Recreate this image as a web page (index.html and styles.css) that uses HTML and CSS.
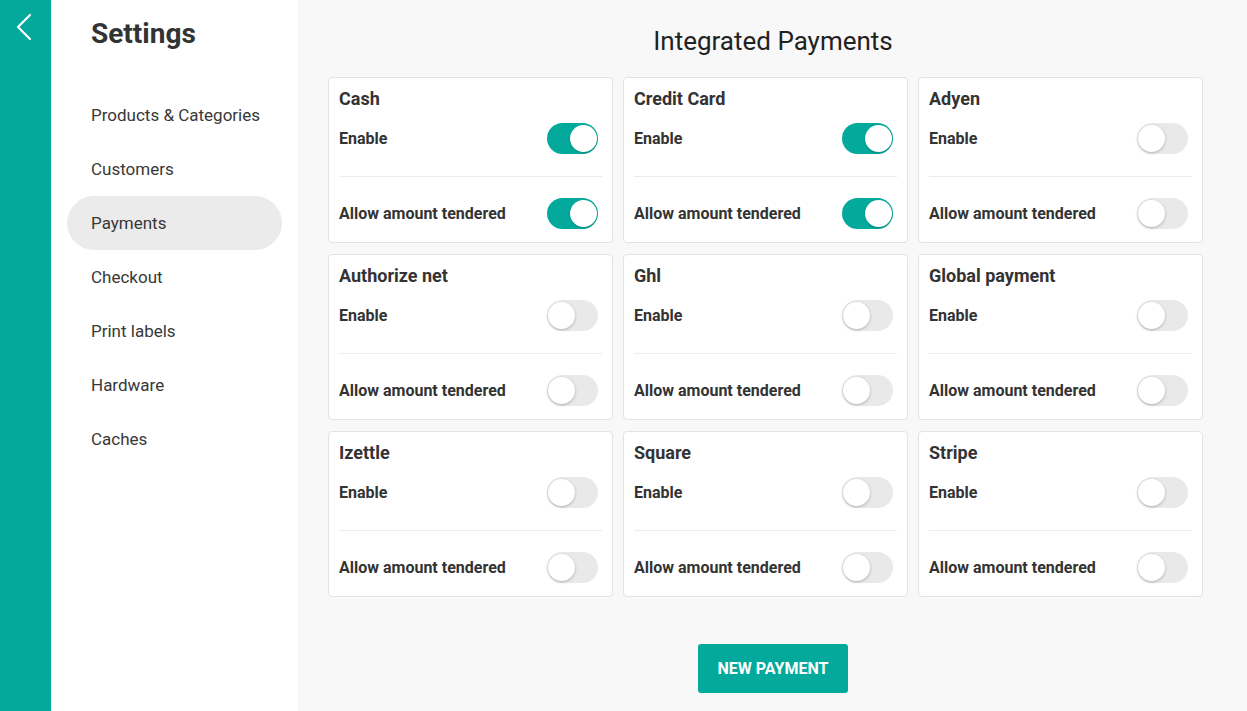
FILE: index.html
```html
<!DOCTYPE html>
<html>
<head>
<meta charset="utf-8">
<link rel="stylesheet" href="styles.css">
</head>
<body>
<div class="app">
  <aside class="rail">
    <svg class="back" width="18" height="28" viewBox="0 0 18 28"><path d="M15 2 L3 14 L15 26" fill="none" stroke="#fff" stroke-width="2.2" stroke-linecap="round" stroke-linejoin="round"/></svg>
  </aside>
  <nav class="settings">
    <h1 class="settings-title">Settings</h1>
    <ul class="nav">
      <li class="nav-item">Products &amp; Categories</li>
      <li class="nav-item">Customers</li>
      <li class="nav-item active">Payments</li>
      <li class="nav-item">Checkout</li>
      <li class="nav-item">Print labels</li>
      <li class="nav-item">Hardware</li>
      <li class="nav-item">Caches</li>
    </ul>
  </nav>
  <main class="main">
    <h2 class="main-title">Integrated Payments</h2>
    <div class="grid">
      <div class="card">
        <div class="card-title">Cash</div>
        <div class="row first"><span>Enable</span><span class="switch on"></span></div>
        <div class="row"><span>Allow amount tendered</span><span class="switch on"></span></div>
      </div>
      <div class="card">
        <div class="card-title">Credit Card</div>
        <div class="row first"><span>Enable</span><span class="switch on"></span></div>
        <div class="row"><span>Allow amount tendered</span><span class="switch on"></span></div>
      </div>
      <div class="card">
        <div class="card-title">Adyen</div>
        <div class="row first"><span>Enable</span><span class="switch"></span></div>
        <div class="row"><span>Allow amount tendered</span><span class="switch"></span></div>
      </div>
      <div class="card">
        <div class="card-title">Authorize net</div>
        <div class="row first"><span>Enable</span><span class="switch"></span></div>
        <div class="row"><span>Allow amount tendered</span><span class="switch"></span></div>
      </div>
      <div class="card">
        <div class="card-title">Ghl</div>
        <div class="row first"><span>Enable</span><span class="switch"></span></div>
        <div class="row"><span>Allow amount tendered</span><span class="switch"></span></div>
      </div>
      <div class="card">
        <div class="card-title">Global payment</div>
        <div class="row first"><span>Enable</span><span class="switch"></span></div>
        <div class="row"><span>Allow amount tendered</span><span class="switch"></span></div>
      </div>
      <div class="card">
        <div class="card-title">Izettle</div>
        <div class="row first"><span>Enable</span><span class="switch"></span></div>
        <div class="row"><span>Allow amount tendered</span><span class="switch"></span></div>
      </div>
      <div class="card">
        <div class="card-title">Square</div>
        <div class="row first"><span>Enable</span><span class="switch"></span></div>
        <div class="row"><span>Allow amount tendered</span><span class="switch"></span></div>
      </div>
      <div class="card">
        <div class="card-title">Stripe</div>
        <div class="row first"><span>Enable</span><span class="switch"></span></div>
        <div class="row"><span>Allow amount tendered</span><span class="switch"></span></div>
      </div>
    </div>
    <div class="actions"><button class="btn">NEW PAYMENT</button></div>
  </main>
</div>
</body>
</html>
```
FILE: styles.css
```css
* { box-sizing: border-box; }
html, body { margin: 0; padding: 0; }
body {
  font-family: Roboto, "Noto Sans", "Liberation Sans", sans-serif;
  color: #333;
  width: 1247px;
  height: 711px;
  overflow: hidden;
}
.app { display: flex; height: 711px; }
.rail {
  width: 51px;
  flex: none;
  background: #03a99b;
  padding: 13px 0 0 15px;
}
.back { display: block; }
.settings {
  width: 247px;
  flex: none;
  background: #fff;
}
.settings-title {
  margin: 0;
  padding: 17px 0 0 40px;
  font-size: 28px;
  line-height: 34px;
  font-weight: 700;
  color: #333;
}
.nav { list-style: none; margin: 37px 0 0; padding: 0 16px; }
.nav-item {
  height: 54px;
  line-height: 54px;
  padding-left: 24px;
  font-size: 17px;
  color: #383838;
  border-radius: 27px;
}
.nav-item.active { background: #ebebeb; }
.main {
  flex: 1;
  background: #f8f8f8;
  padding: 0 45px 0 30px;
}
.main-title {
  margin: 0;
  padding: 26px 0 0 15px;
  text-align: center;
  font-size: 26px;
  line-height: 31px;
  font-weight: 400;
  color: #222;
}
.grid {
  margin-top: 20px;
  display: grid;
  grid-template-columns: repeat(3, 285px);
  grid-auto-rows: 166px;
  column-gap: 10px;
  row-gap: 11px;
}
.card {
  background: #fff;
  border: 1px solid #e3e3e3;
  border-radius: 4px;
  padding: 10px 10px 13px 10px;
  height: 166px;
}
.card-title {
  font-size: 18px;
  line-height: 22px;
  font-weight: 700;
  color: #333;
}
.row {
  display: flex;
  align-items: center;
  justify-content: space-between;
  font-size: 16px;
  font-weight: 700;
  color: #333;
  padding-right: 4px;
}
.row.first {
  margin-top: 13px;
  padding-bottom: 22px;
  border-bottom: 1px solid #ececec;
}
.row:not(.first) { padding-top: 21px; }
.switch {
  position: relative;
  width: 51px;
  height: 31px;
  border-radius: 16px;
  background: #e9e9e9;
  display: block;
}
.switch::after {
  content: "";
  position: absolute;
  top: 2px;
  left: 1px;
  width: 27px;
  height: 27px;
  border-radius: 50%;
  background: #fff;
  box-shadow: 0 1px 3px rgba(0,0,0,0.25);
}
.switch.on { background: #03a99b; }
.switch.on::after { left: 23px; box-shadow: 0 1px 2px rgba(0,0,0,0.2); }
.actions {
  display: flex;
  justify-content: center;
  margin-top: 47px;
  padding-left: 15px;
}
.btn {
  width: 150px;
  height: 49px;
  border: none;
  border-radius: 3px;
  background: #03a99b;
  color: #fff;
  font-family: Roboto, "Noto Sans", sans-serif;
  font-size: 16px;
  font-weight: 700;
}
```
